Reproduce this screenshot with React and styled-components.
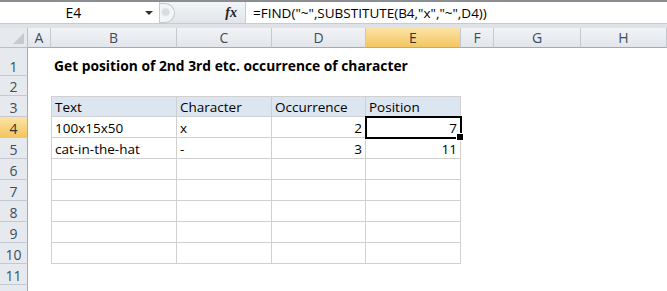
import React from 'react';
import styled, { createGlobalStyle } from 'styled-components';

const GlobalStyle = createGlobalStyle`
  html, body {
    margin: 0;
    padding: 0;
    background: #ffffff;
    overflow: hidden;
  }
  * { box-sizing: border-box; }
`;

//-----------Styled Component-----------//

const Page = styled.div`
  width: 667px;
  height: 291px;
  overflow: hidden;
  font-family: "Open Sans", "Liberation Sans", sans-serif;
  color: #000;
`;

const FormulaBar = styled.div`
  display: flex;
  height: 24px;
  border-top: 2px solid #8a8d91;
  border-bottom: 1px solid #c7cbd1;
  background: #ffffff;
`;

const NameBox = styled.div`
  width: 160px;
  display: flex;
  align-items: center;
  border-right: 1px solid #c7cbd1;
`;

const NameText = styled.div`
  flex: 1;
  text-align: center;
  font-size: 14px;
  padding-left: 2px;
`;

const DropArrow = styled.div`
  width: 0;
  height: 0;
  margin-right: 6px;
  border-left: 4px solid transparent;
  border-right: 4px solid transparent;
  border-top: 4px solid #333;
`;

const FxArea = styled.div`
  width: 86px;
  display: flex;
  align-items: center;
  justify-content: space-between;
  padding-right: 8px;
  background: linear-gradient(#f3f5f7, #e1e5ea);
  border-right: 1px solid #c7cbd1;
`;

const Grip = styled.div`
  width: 15px;
  height: 20px;
  border-radius: 0 10px 10px 0;
  border: 1px solid #c3c8ce;
  border-left: none;
  background: radial-gradient(circle at 40% 45%, #d9dde2 0 3px, #f4f5f7 5px);
`;

const Fx = styled.span`
  font-family: "Liberation Serif", "DejaVu Serif", serif;
  font-style: italic;
  font-weight: bold;
  font-size: 14px;
  color: #222;
`;

const FormulaInput = styled.div`
  flex: 1;
  display: flex;
  align-items: center;
  padding-left: 7px;
  font-size: 13.5px;
  white-space: nowrap;
`;

const Spacer = styled.div`
  height: 4px;
  background: #dfe3e8;
`;

const Sheet = styled.div`
  display: grid;
  grid-template-columns: 28px 23px 126px 95px 94px 95px 33px 87px 1fr;
`;

const Corner = styled.div`
  height: 20px;
  background: #e6eaee;
  border-right: 1px solid #b9c0c9;
  border-bottom: 1px solid #b9c0c9;
  position: relative;
  &::after {
    content: '';
    position: absolute;
    right: 3px;
    bottom: 3px;
    border-left: 11px solid transparent;
    border-bottom: 11px solid #c4cad2;
  }
`;

const ColHead = styled.div`
  height: 20px;
  display: flex;
  align-items: center;
  justify-content: center;
  font-size: 14px;
  color: ${p => (p.$active ? '#333' : '#3e4c5e')};
  background: ${p =>
    p.$active
      ? 'linear-gradient(#fbe3a6, #f4c660)'
      : 'linear-gradient(#f1f3f6, #e2e6eb)'};
  border-right: 1px solid #c3c9d1;
  border-bottom: 1px solid ${p => (p.$active ? '#e0a43a' : '#9eaab8')};
`;

const RowHead = styled.div`
  height: ${p => p.$h}px;
  display: flex;
  align-items: center;
  justify-content: center;
  padding-top: ${p => (p.$h > 22 ? 9 : 2)}px;
  font-size: 14px;
  color: ${p => (p.$active ? '#333' : '#3e4c5e')};
  background: ${p =>
    p.$active ? 'linear-gradient(#fbe3a6, #f4c660)' : '#e6eaee'};
  border-right: 1px solid ${p => (p.$active ? '#e0a43a' : '#9eaab8')};
  border-bottom: 1px solid #c3c9d1;
`;

const Cell = styled.div`
  height: ${p => p.$h}px;
  position: relative;
  display: flex;
  align-items: flex-end;
  justify-content: ${p => (p.$right ? 'flex-end' : 'flex-start')};
  padding: 0 3px 0 3px;
  font-size: 13.5px;
  font-weight: ${p => (p.$bold ? 700 : 400)};
  white-space: nowrap;
  overflow: ${p => (p.$bold || p.$selected ? 'visible' : 'hidden')};
  background: ${p => (p.$head ? '#dce6f1' : '#ffffff')};
  border-right: 1px solid ${p => (p.$table ? '#d0d0d0' : 'transparent')};
  border-bottom: 1px solid ${p => (p.$table ? '#d0d0d0' : 'transparent')};
  border-left: ${p => (p.$first ? '1px solid #d0d0d0' : 'none')};
  border-top: ${p => (p.$top ? '1px solid #d0d0d0' : 'none')};
  z-index: ${p => (p.$bold || p.$selected ? 2 : 'auto')};
`;

const Title = styled.span`
  font-size: 13.8px;
`;

const Selection = styled.div`
  position: absolute;
  inset: -1px -2px -2px -1px;
  border: 2px solid #000;
  pointer-events: none;
  &::after {
    content: '';
    position: absolute;
    right: -4px;
    bottom: -4px;
    width: 6px;
    height: 6px;
    background: #000;
    border: 1px solid #fff;
  }
`;

//--------------------------------------------//

const COLUMNS = ['A', 'B', 'C', 'D', 'E', 'F', 'G', 'H'];
const TABLE_COLS = ['B', 'C', 'D', 'E'];
const ROWS = [
  { n: 1, h: 28 },
  { n: 2, h: 20 },
  { n: 3, h: 21 },
  { n: 4, h: 21 },
  { n: 5, h: 21 },
  { n: 6, h: 21 },
  { n: 7, h: 21 },
  { n: 8, h: 21 },
  { n: 9, h: 21 },
  { n: 10, h: 21 },
  { n: 11, h: 21 },
  { n: 12, h: 21 },
];

const DATA = {
  3: { B: 'Text', C: 'Character', D: 'Occurrence', E: 'Position' },
  4: { B: '100x15x50', C: 'x', D: 2, E: 7 },
  5: { B: 'cat-in-the-hat', C: '-', D: 3, E: 11 },
};

function SheetCell({ row, col }) {
  const inTable = row.n >= 3 && row.n <= 10 && TABLE_COLS.includes(col);
  const value = DATA[row.n] && DATA[row.n][col];
  const isTitle = row.n === 1 && col === 'B';
  const selected = row.n === 4 && col === 'E';
  return (
    <Cell
      $h={row.h}
      $table={inTable}
      $head={inTable && row.n === 3}
      $first={inTable && col === 'B'}
      $top={inTable && row.n === 3}
      $right={typeof value === 'number'}
      $bold={isTitle}
      $selected={selected}
    >
      {isTitle ? <Title>Get position of 2nd 3rd etc. occurrence of character</Title> : value}
      {selected && <Selection />}
    </Cell>
  );
}

export default function App() {
  return (
    <Page>
      <GlobalStyle />
      <FormulaBar>
        <NameBox>
          <NameText>E4</NameText>
          <DropArrow />
        </NameBox>
        <FxArea>
          <Grip />
          <Fx>fx</Fx>
        </FxArea>
        <FormulaInput>=FIND("~",SUBSTITUTE(B4,"x","~",D4))</FormulaInput>
      </FormulaBar>
      <Spacer />
      <Sheet>
        <Corner />
        {COLUMNS.map(c => (
          <ColHead key={c} $active={c === 'E'}>{c}</ColHead>
        ))}
        {ROWS.map(row => (
          <React.Fragment key={row.n}>
            <RowHead $h={row.h} $active={row.n === 4}>{row.n}</RowHead>
            {COLUMNS.map(c => (
              <SheetCell key={c} row={row} col={c} />
            ))}
          </React.Fragment>
        ))}
      </Sheet>
    </Page>
  );
}
